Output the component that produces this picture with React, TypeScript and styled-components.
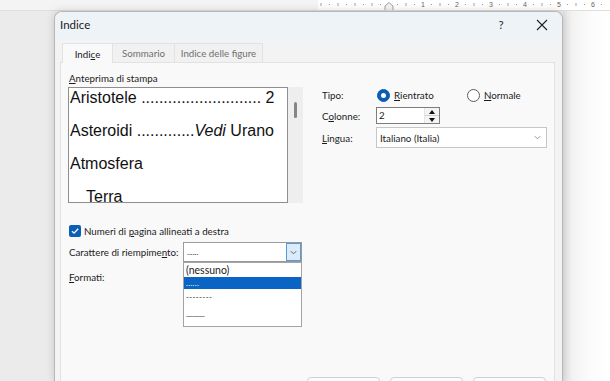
import React from "react";
import styled, { createGlobalStyle } from "styled-components";

const Global = createGlobalStyle`
  html, body { margin: 0; padding: 0; }
  body {
    background: #ebebeb;
    overflow: hidden;
    font-family: Lato, "Noto Sans", sans-serif;
    color: #1b1b1b;
  }
`;

const Page = styled.div`
  width: 610px;
  height: 381px;
  overflow: hidden;
  display: flex;
  flex-direction: column;
  background: #ebebeb;
`;

const RulerStrip = styled.div`
  height: 10px;
  flex: none;
  display: flex;
  background: #f4f4f4;
  border-bottom: 1px solid #dedede;
`;

const RulerSpacer = styled.div`
  width: 318px;
  flex: none;
`;

const RulerBody = styled.div`
  flex: 1;
  background: #ffffff;
  display: flex;
`;

const Desk = styled.div`
  flex: 1;
  min-height: 0;
  display: flex;
`;

const LeftGutter = styled.div`
  width: 54px;
  flex: none;
  background: #ebebeb;
`;

const RightPage = styled.div`
  flex: 1;
  background: linear-gradient(to right, #e2e2e2 0, #f3f3f3 10px, #fcfcfc 28px, #ffffff 48px);
`;

const Dialog = styled.div`
  width: 509px;
  flex: none;
  box-sizing: border-box;
  border: 1px solid #b7b7b7;
  border-bottom: none;
  border-radius: 8px 8px 0 0;
  background: #f3f3f3;
  display: flex;
  flex-direction: column;
  box-shadow: 0 0 9px rgba(0, 0, 0, 0.16);
  position: relative;
  z-index: 1;
`;

const TitleBar = styled.div`
  height: 25px;
  flex: none;
  display: flex;
  align-items: center;
  padding-left: 5px;
  background: #eef3f8;
  border-radius: 7px 7px 0 0;
`;

const Title = styled.div`
  flex: 1;
  font-size: 11.5px;
  color: #1a1a1a;
`;

const CaptionButton = styled.div<{ $w: number }>`
  width: ${(p) => p.$w}px;
  height: 25px;
  display: flex;
  align-items: center;
  justify-content: center;
  font-size: 11.5px;
  color: #2a2a2a;
`;

const TabStrip = styled.div`
  height: 19px;
  flex: none;
  display: flex;
  padding: 6px 0 0 7px;
  background: linear-gradient(#eef3f8, #f3f3f3 6px);
  position: relative;
  z-index: 2;
`;

const Tab = styled.div<{ $w: number; $active?: boolean }>`
  width: ${(p) => p.$w}px;
  box-sizing: border-box;
  display: flex;
  align-items: center;
  justify-content: center;
  white-space: nowrap;
  font-size: 9.75px;
  color: ${(p) => (p.$active ? "#1b1b1b" : "#707070")};
  background: ${(p) => (p.$active ? "#f9f9f9" : "#f1f1f1")};
  border: 1px solid #e2e2e2;
  border-bottom: none;
  margin-bottom: ${(p) => (p.$active ? "-1px" : "0")};
  height: ${(p) => (p.$active ? "20px" : "19px")};
  & + & {
    border-left: none;
  }
`;

const Panel = styled.div`
  flex: 1;
  margin: 0 7px 0 5px;
  background: #f9f9f9;
  border: 1px solid #e2e2e2;
  border-bottom: none;
  padding: 8px 8px 0 8px;
  display: flex;
  flex-direction: column;
  font-size: 9.75px;
`;

const TopSection = styled.div`
  display: flex;
  align-items: flex-start;
`;

const PreviewColumn = styled.div`
  width: 235px;
  margin-left: -1px;
  display: flex;
  flex-direction: column;
`;

const FieldLabel = styled.div`
  height: 14px;
  line-height: 14px;
  margin-left: 1px;
  margin-bottom: 2px;
  white-space: nowrap;
`;

const PreviewFrame = styled.div`
  display: flex;
  height: 116px;
`;

const PreviewBox = styled.div`
  width: 220px;
  box-sizing: border-box;
  height: 116px;
  border: 1px solid #8e8e8e;
  background: #ffffff;
  overflow: hidden;
  padding-left: 1px;
  font-family: "Liberation Sans", Arial, sans-serif;
  font-size: 16px;
  color: #111;
`;

const Entry = styled.div<{ $indent?: number }>`
  height: 33px;
  line-height: 20px;
  white-space: nowrap;
  padding-left: ${(p) => p.$indent || 0}px;
`;

const ScrollTrack = styled.div`
  width: 15px;
  height: 116px;
  background: #eeeeee;
  display: flex;
  justify-content: center;
  padding-top: 15px;
  box-sizing: border-box;
`;

const ScrollThumb = styled.div`
  width: 3px;
  height: 16px;
  border-radius: 2px;
  background: #858585;
`;

const OptionsColumn = styled.div`
  margin-left: 19px;
  padding-top: 16px;
  display: flex;
  flex-direction: column;
`;

const OptionRow = styled.div<{ $h: number; $gap?: number }>`
  height: ${(p) => p.$h}px;
  margin-bottom: ${(p) => p.$gap || 0}px;
  display: flex;
  align-items: center;
`;

const OptionLabel = styled.div`
  width: 54px;
  flex: none;
  white-space: nowrap;
`;

const RadioOption = styled.div<{ $w?: number }>`
  width: ${(p) => (p.$w ? `${p.$w}px` : "auto")};
  display: flex;
  align-items: center;
  gap: 4px;
  margin-left: 1px;
`;

const RadioCircle = styled.div<{ $on?: boolean }>`
  width: 13px;
  height: 13px;
  box-sizing: border-box;
  border-radius: 50%;
  flex: none;
  display: flex;
  align-items: center;
  justify-content: center;
  background: ${(p) => (p.$on ? "#0a5fb4" : "#ffffff")};
  border: 1px solid ${(p) => (p.$on ? "#0a5fb4" : "#5c5c5c")};
  &::after {
    content: "";
    display: ${(p) => (p.$on ? "block" : "none")};
    width: 5px;
    height: 5px;
    border-radius: 50%;
    background: #ffffff;
  }
`;

const SpinBox = styled.div`
  width: 64px;
  height: 17px;
  box-sizing: border-box;
  border: 1px solid #7d7d7d;
  background: #ffffff;
  display: flex;
`;

const SpinValue = styled.div`
  flex: 1;
  padding-left: 2px;
  line-height: 15px;
`;

const SpinArrows = styled.div`
  width: 14px;
  display: flex;
  flex-direction: column;
  border-left: 1px solid #e4e4e4;
`;

const SpinHalf = styled.div<{ $down?: boolean }>`
  flex: 1;
  display: flex;
  align-items: center;
  justify-content: center;
  background: #f4f4f4;
  border-top: ${(p) => (p.$down ? "1px solid #d0d0d0" : "none")};
  &::after {
    content: "";
    width: 0;
    height: 0;
    border-left: 3px solid transparent;
    border-right: 3px solid transparent;
    ${(p) =>
      p.$down ? "border-top: 4px solid #111;" : "border-bottom: 4px solid #111;"}
  }
`;

const SelectBox = styled.div`
  width: 171px;
  height: 21px;
  box-sizing: border-box;
  border: 1px solid #c6c6c6;
  background: #ffffff;
  display: flex;
  align-items: center;
  padding-left: 3px;
`;

const SelectValue = styled.div`
  flex: 1;
`;

const SelectChevron = styled.div`
  width: 18px;
  display: flex;
  justify-content: center;
  color: #8a8a8a;
`;

const CheckRow = styled.div`
  margin-top: 20px;
  height: 16px;
  display: flex;
  align-items: center;
  gap: 3px;
  white-space: nowrap;
`;

const CheckBox = styled.div`
  width: 12px;
  height: 12px;
  border-radius: 2px;
  background: #0a5fb4;
  display: flex;
  align-items: center;
  justify-content: center;
`;

const FillRow = styled.div`
  margin-top: 3px;
  height: 20px;
  display: flex;
  align-items: center;
`;

const FillLabel = styled.div`
  width: 114px;
  flex: none;
  white-space: nowrap;
`;

const Combo = styled.div`
  position: relative;
  width: 119px;
  height: 20px;
  box-sizing: border-box;
  border: 1px solid #9a9a9a;
  background: #ffffff;
  display: flex;
  align-items: center;
`;

const ComboValue = styled.div`
  flex: 1;
  padding-left: 3px;
  font-size: 8px;
  line-height: 18px;
`;

const ComboButton = styled.div`
  width: 15px;
  height: 18px;
  box-sizing: border-box;
  border: 1px solid #5a9ad6;
  background: #dcebfa;
  display: flex;
  align-items: center;
  justify-content: center;
  color: #444;
`;

const DropList = styled.div`
  position: absolute;
  left: -1px;
  top: 19px;
  width: 119px;
  height: 65px;
  box-sizing: border-box;
  border: 1px solid #a4a4a4;
  background: #ffffff;
  display: flex;
  flex-direction: column;
  z-index: 5;
`;

const DropItem = styled.div<{ $h: number; $selected?: boolean; $small?: boolean; $tight?: boolean }>`
  height: ${(p) => p.$h}px;
  line-height: ${(p) => p.$h}px;
  padding-left: 2px;
  font-size: ${(p) => (p.$small ? "8px" : "10.5px")};
  letter-spacing: ${(p) => (p.$tight ? "-0.6px" : p.$small ? "0.3px" : "0")};
  background: ${(p) => (p.$selected ? "#0a64c4" : "transparent")};
  color: ${(p) => (p.$selected ? "#ffffff" : "#1b1b1b")};
  white-space: nowrap;
  overflow: hidden;
`;

const FormatsRow = styled.div`
  margin-top: 8px;
  height: 14px;
  line-height: 14px;
`;

const ButtonRow = styled.div`
  margin-top: 93px;
  margin-left: 238px;
  display: flex;
  gap: 10px;
`;

const PushButton = styled.div`
  width: 73px;
  height: 24px;
  box-sizing: border-box;
  border: 1px solid #d0d0d0;
  border-radius: 4px;
  background: #fdfdfd;
`;

const Key = styled.span`
  text-decoration: underline;
  text-underline-offset: 1px;
`;

function Ruler() {
  const items: React.ReactNode[] = [];
  const marker = 71;
  const step = 8.5;
  for (let i = 1; i <= 8; i++) {
    const x = marker - i * step;
    if (x < 2) break;
    items.push(
      i % 2 === 0 ? (
        <line key={`l${i}`} x1={x} x2={x} y1={3} y2={6} stroke="#8a8a8a" strokeWidth={0.8} />
      ) : (
        <circle key={`l${i}`} cx={x} cy={4.5} r={0.6} fill="#8a8a8a" />
      )
    );
  }
  for (let i = 1; i <= 26; i++) {
    const x = marker + i * step;
    if (x > 291) break;
    const m = i % 4;
    if (m === 0) {
      items.push(
        <text key={`r${i}`} x={x} y={7} fontSize={7} textAnchor="middle" fill="#666" fontFamily="Liberation Sans, sans-serif">
          {i / 4}
        </text>
      );
    } else if (m === 2) {
      items.push(<line key={`r${i}`} x1={x} x2={x} y1={3} y2={6} stroke="#8a8a8a" strokeWidth={0.8} />);
    } else {
      items.push(<circle key={`r${i}`} cx={x} cy={4.5} r={0.6} fill="#8a8a8a" />);
    }
  }
  return (
    <svg width={292} height={10} viewBox="0 0 292 10">
      {items}
      <path d={`M${marker - 4} 10 V6 L${marker} 2.5 L${marker + 4} 6 V10`} fill="#f3f3f3" stroke="#8a8a8a" strokeWidth={0.8} />
    </svg>
  );
}

const CloseIcon = () => (
  <svg width="12" height="12" viewBox="0 0 12 12">
    <path d="M1 1 L11 11 M11 1 L1 11" stroke="#1f1f1f" strokeWidth="1.1" fill="none" />
  </svg>
);

const ChevronDown = ({ size = 9, color = "currentColor" }: { size?: number; color?: string }) => (
  <svg width={size} height={size} viewBox="0 0 10 10">
    <path d="M2 3.5 L5 6.5 L8 3.5" stroke={color} strokeWidth="1" fill="none" />
  </svg>
);

const CheckMark = () => (
  <svg width="10" height="10" viewBox="0 0 10 10">
    <path d="M2 5.2 L4.1 7.2 L8.2 2.8" stroke="#ffffff" strokeWidth="1.3" fill="none" />
  </svg>
);

export default function App() {
  return (
    <Page>
      <Global />
      <RulerStrip>
        <RulerSpacer />
        <RulerBody>
          <Ruler />
        </RulerBody>
      </RulerStrip>
      <Desk>
        <LeftGutter />
        <Dialog>
          <TitleBar>
            <Title>Indice</Title>
            <CaptionButton $w={40}>?</CaptionButton>
            <CaptionButton $w={41}>
              <CloseIcon />
            </CaptionButton>
          </TitleBar>
          <TabStrip>
            <Tab $w={51} $active>
              Indi<Key>c</Key>e
            </Tab>
            <Tab $w={62}>Sommario</Tab>
            <Tab $w={88}>Indice delle figure</Tab>
          </TabStrip>
          <Panel>
            <TopSection>
              <PreviewColumn>
                <FieldLabel>
                  <Key>A</Key>nteprima di stampa
                </FieldLabel>
                <PreviewFrame>
                  <PreviewBox>
                    <Entry>Aristotele ........................... 2</Entry>
                    <Entry>
                      Asteroidi .............<i>Vedi</i> Urano
                    </Entry>
                    <Entry>Atmosfera</Entry>
                    <Entry $indent={16}>Terra</Entry>
                  </PreviewBox>
                  <ScrollTrack>
                    <ScrollThumb />
                  </ScrollTrack>
                </PreviewFrame>
              </PreviewColumn>
              <OptionsColumn>
                <OptionRow $h={16} $gap={4}>
                  <OptionLabel>Tipo:</OptionLabel>
                  <RadioOption $w={89}>
                    <RadioCircle $on />
                    <span>
                      <Key>R</Key>ientrato
                    </span>
                  </RadioOption>
                  <RadioOption>
                    <RadioCircle />
                    <span>
                      <Key>N</Key>ormale
                    </span>
                  </RadioOption>
                </OptionRow>
                <OptionRow $h={17} $gap={3}>
                  <OptionLabel>
                    C<Key>o</Key>lonne:
                  </OptionLabel>
                  <SpinBox>
                    <SpinValue>2</SpinValue>
                    <SpinArrows>
                      <SpinHalf />
                      <SpinHalf $down />
                    </SpinArrows>
                  </SpinBox>
                </OptionRow>
                <OptionRow $h={21}>
                  <OptionLabel>
                    <Key>L</Key>ingua:
                  </OptionLabel>
                  <SelectBox>
                    <SelectValue>Italiano (Italia)</SelectValue>
                    <SelectChevron>
                      <ChevronDown size={9} />
                    </SelectChevron>
                  </SelectBox>
                </OptionRow>
              </OptionsColumn>
            </TopSection>

            <CheckRow>
              <CheckBox>
                <CheckMark />
              </CheckBox>
              <span>
                Numeri di <Key>p</Key>agina allineati a destra
              </span>
            </CheckRow>

            <FillRow>
              <FillLabel>
                Carattere di riempime<Key>n</Key>to:
              </FillLabel>
              <Combo>
                <ComboValue>......</ComboValue>
                <ComboButton>
                  <ChevronDown size={9} color="#555" />
                </ComboButton>
                <DropList>
                  <DropItem $h={14}>(nessuno)</DropItem>
                  <DropItem $h={12} $selected $small>
                    ......
                  </DropItem>
                  <DropItem $h={16} $small>
                    --------
                  </DropItem>
                  <DropItem $h={16} $small $tight>
                    ______
                  </DropItem>
                </DropList>
              </Combo>
            </FillRow>

            <FormatsRow>
              <Key>F</Key>ormati:
            </FormatsRow>

            <ButtonRow>
              <PushButton />
              <PushButton />
              <PushButton />
            </ButtonRow>
          </Panel>
        </Dialog>
        <RightPage />
      </Desk>
    </Page>
  );
}
